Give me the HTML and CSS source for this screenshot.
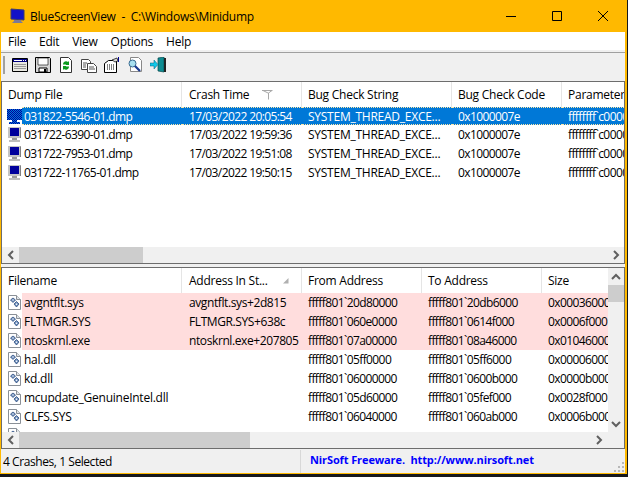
FILE: index.html
```html
<!DOCTYPE html>
<html lang="en">
  <head>
    <meta charset="UTF-8" />
    <title>BlueScreenView</title>
    <link rel="stylesheet" href="styles.css">
  </head>
  <body>
    <svg class="defs" width="0" height="0">
      <defs>
        <pattern id="dither" width="2" height="2" patternUnits="userSpaceOnUse">
          <rect width="2" height="2" fill="#0078d7"/>
          <rect width="1" height="1" fill="#00009c"/>
          <rect x="1" y="1" width="1" height="1" fill="#00009c"/>
        </pattern>
      </defs>
      <symbol id="monitor" viewBox="0 0 15 15">
        <path d="M1 0h13v11H1z" fill="#c4c4c4"/>
        <path d="M3 1h9v8H3z" fill="#00009c"/>
        <path d="M14 0v11h-1V1z" fill="#808080"/>
        <path d="M5 11h5v2H5z" fill="#9a9a9a"/>
        <path d="M2 13h11v2H2z" fill="#bdbdbd"/>
      </symbol>
      <symbol id="monitor-sel" viewBox="0 0 15 15">
        <path d="M0 0h15v11H0zM5 11h5v2H5zM2 13h11v2H2z" fill="url(#dither)"/>
      </symbol>
      <symbol id="driver" viewBox="0 0 13 15">
        <path d="M.5.5h8l4 4v10H.5z" fill="#fff" stroke="#8a9097"/>
        <path d="M8.500.5v4h4" fill="#dfe3e8" stroke="#8a9097"/>
        <path d="M2.500 5l2.500-2 2.500 2-2.500 2.500zM6 9l2.500-2.500L11 9l-2.500 3z" fill="#6f8fbc" stroke="#2f4f80" stroke-width=".8"/>
        <circle cx="5" cy="5" r=".7" fill="#fff"/>
        <circle cx="8.500" cy="9.300" r=".8" fill="#fff"/>
      </symbol>
      <symbol id="chev-left" viewBox="0 0 8 10"><path d="M6 1L2 5l4 4" fill="none" stroke="#606060" stroke-width="2"/></symbol>
      <symbol id="chev-right" viewBox="0 0 8 10"><path d="M2 1l4 4-4 4" fill="none" stroke="#606060" stroke-width="2"/></symbol>
      <symbol id="chev-up" viewBox="0 0 10 8"><path d="M1 6l4-4 4 4" fill="none" stroke="#606060" stroke-width="2"/></symbol>
      <symbol id="chev-down" viewBox="0 0 10 8"><path d="M1 2l4 4 4-4" fill="none" stroke="#606060" stroke-width="2"/></symbol>
    </svg>

    <div class="window">
      <div class="titlebar">
        <svg class="app-icon" width="16" height="16" viewBox="0 0 16 16">
          <path d="M2 1l13 1v10L2 11z" fill="#1212c8" stroke="#3a3a70"/>
          <path d="M5 12h7v1l2 2H3l2-2z" fill="#7a7a98"/>
        </svg>
        <span class="title-text">BlueScreenView&nbsp; - &nbsp;C:\Windows\Minidump</span>
        <span class="win-buttons">
          <svg width="10" height="10" viewBox="0 0 10 10"><path d="M0 5.500h10" stroke="#000"/></svg>
          <svg width="10" height="10" viewBox="0 0 10 10"><path d="M.5.5h9v9h-9z" fill="none" stroke="#000"/></svg>
          <svg width="10" height="10" viewBox="0 0 10 10"><path d="M0 0l10 10M10 0L0 10" stroke="#000"/></svg>
        </span>
      </div>

      <div class="menubar">
        <span>File</span><span>Edit</span><span>View</span><span>Options</span><span>Help</span>
      </div>

      <div class="toolbar">
        <span class="grip"></span>
        <!-- properties window -->
        <svg width="16" height="16" viewBox="0 0 16 16"><path d="M.5 1.500h15v13H.5z" fill="#e8e8e0" stroke="#000"/><path d="M1 2h14v3H1z" fill="#000080"/><path d="M2 3h8v1H2zM11 3h1v1h-1zM13 3h1v1h-1z" fill="#fff"/><path d="M2 7.500h12M2 9.500h12M2 11.500h12" stroke="#999"/></svg>
        <!-- save -->
        <svg width="16" height="16" viewBox="0 0 16 16"><path d="M.5.5h14l1 1v14H.5z" fill="#d8d8d8" stroke="#000"/><path d="M3 1h10v7H3z" fill="#fff" stroke="#000" stroke-width=".6"/><path d="M4 11h8v4H4z" fill="#fff" stroke="#000"/><path d="M9 12h2v3H9z"/></svg>
        <!-- refresh -->
        <svg width="16" height="16" viewBox="0 0 16 16"><path d="M2.500.5h8l3 3v12h-11z" fill="#fff" stroke="#333"/><path d="M5 7a3 3 0 0 1 5-2l1-1v4H7l1-1a2 2 0 0 0-2 1z" fill="#0a9a1e"/><path d="M11 10a3 3 0 0 1-5 2l-1 1V9h4l-1 1a2 2 0 0 0 2-1z" fill="#0a9a1e"/></svg>
        <!-- copy -->
        <svg width="16" height="16" viewBox="0 0 16 16"><path d="M.5 2.500h7l2 2v8h-9z" fill="#fff" stroke="#444"/><path d="M6.500 6.500h6l3 3v6h-9z" fill="#fff" stroke="#444"/><path d="M2 6h4M2 8h3M2 10h3M8 10h5M8 12h6" stroke="#555"/></svg>
        <!-- html report -->
        <svg width="16" height="16" viewBox="0 0 16 16"><path d="M.5 6.500l4-3h8v12H.5z" fill="#fff" stroke="#000"/><path d="M3 8h7M3 10h7M3 12h7" stroke="#000" stroke-dasharray="1 1"/><path d="M8 3l5-2 1 3-3 1z" fill="#d8d8d8" stroke="#000" stroke-width=".7"/><path d="M14.500 0v5" stroke="#000090"/></svg>
        <!-- find -->
        <svg width="16" height="16" viewBox="0 0 16 16"><path d="M3.500.5h8l3 3v11h-11z" fill="#fff" stroke="#888"/><circle cx="5.500" cy="6.500" r="3.500" fill="#a8e0f0" stroke="#3a6a90"/><path d="M8 9l5 5" stroke="#1a3a90" stroke-width="2.200"/></svg>
        <!-- exit -->
        <svg width="16" height="16" viewBox="0 0 16 16"><path d="M8 1l6-1v15l-6-1z" fill="#0e8c92" stroke="#06484c" stroke-width=".7"/><path d="M14 1h2v14h-2z" fill="#222"/><path d="M0 6h4V3l4 4.500L4 12V9H0z" fill="#10c8e8" stroke="#0a5a7a" stroke-width=".5"/></svg>
      </div>

      <div class="pane pane-top">
        <div class="list">
          <div class="row head">
            <span>Dump File</span>
            <span>Crash Time
              <svg class="sort sort-time" width="11" height="10" viewBox="0 0 11 10"><path d="M0 .5h10.500M1 .5l6 3M10 .5L6.500 3v6.500" fill="none" stroke="#a8a8a8"/></svg>
            </span>
            <span>Bug Check String</span>
            <span>Bug Check Code</span>
            <span>Parameter 1</span>
          </div>
          <div class="row selected">
            <span class="name"><svg width="15" height="15"><use href="#monitor-sel"/></svg><b class="num">031822-5546-01.dmp</b></span>
            <span class="num">17/03/2022 20:05:54</span>
            <span>SYSTEM_THREAD_EXCE...</span>
            <span class="num">0x1000007e</span>
            <span class="num">ffffffff`c0000005</span>
          </div>
          <div class="row">
            <span class="name"><svg width="15" height="15"><use href="#monitor"/></svg><b class="num">031722-6390-01.dmp</b></span>
            <span class="num">17/03/2022 19:59:36</span>
            <span>SYSTEM_THREAD_EXCE...</span>
            <span class="num">0x1000007e</span>
            <span class="num">ffffffff`c0000005</span>
          </div>
          <div class="row">
            <span class="name"><svg width="15" height="15"><use href="#monitor"/></svg><b class="num">031722-7953-01.dmp</b></span>
            <span class="num">17/03/2022 19:51:08</span>
            <span>SYSTEM_THREAD_EXCE...</span>
            <span class="num">0x1000007e</span>
            <span class="num">ffffffff`c0000005</span>
          </div>
          <div class="row">
            <span class="name"><svg width="15" height="15"><use href="#monitor"/></svg><b class="num">031722-11765-01.dmp</b></span>
            <span class="num">17/03/2022 19:50:15</span>
            <span>SYSTEM_THREAD_EXCE...</span>
            <span class="num">0x1000007e</span>
            <span class="num">ffffffff`c0000005</span>
          </div>
        </div>
        <div class="hscroll">
          <span class="arrow"><svg width="8" height="10"><use href="#chev-left"/></svg></span>
          <span class="thumb thumb-top"></span>
          <span class="arrow arrow-end"><svg width="8" height="10"><use href="#chev-right"/></svg></span>
        </div>
      </div>

      <div class="pane pane-bottom">
        <div class="body-wrap">
          <div class="list">
            <div class="row head">
              <span>Filename</span>
              <span>Address In St...
                <svg class="sort sort-addr" width="6" height="6" viewBox="0 0 6 6"><path d="M5.500 0v5.500H0z" fill="#b0b0b0"/></svg>
              </span>
              <span>From Address</span>
              <span>To Address</span>
              <span>Size</span>
            </div>
            <div class="row pink">
              <span class="name"><svg width="13" height="15"><use href="#driver"/></svg><b>avgntflt.sys</b></span>
              <span class="addr">avgntflt.sys+2d815</span>
              <span class="num">fffff801`20d80000</span>
              <span class="num">fffff801`20db6000</span>
              <span class="num">0x00036000</span>
            </div>
            <div class="row pink">
              <span class="name"><svg width="13" height="15"><use href="#driver"/></svg><b>FLTMGR.SYS</b></span>
              <span class="addr">FLTMGR.SYS+638c</span>
              <span class="num">fffff801`060e0000</span>
              <span class="num">fffff801`0614f000</span>
              <span class="num">0x0006f000</span>
            </div>
            <div class="row pink">
              <span class="name"><svg width="13" height="15"><use href="#driver"/></svg><b>ntoskrnl.exe</b></span>
              <span class="addr">ntoskrnl.exe+207805</span>
              <span class="num">fffff801`07a00000</span>
              <span class="num">fffff801`08a46000</span>
              <span class="num">0x01046000</span>
            </div>
            <div class="row">
              <span class="name"><svg width="13" height="15"><use href="#driver"/></svg><b>hal.dll</b></span>
              <span></span>
              <span class="num">fffff801`05ff0000</span>
              <span class="num">fffff801`05ff6000</span>
              <span class="num">0x00006000</span>
            </div>
            <div class="row">
              <span class="name"><svg width="13" height="15"><use href="#driver"/></svg><b>kd.dll</b></span>
              <span></span>
              <span class="num">fffff801`06000000</span>
              <span class="num">fffff801`0600b000</span>
              <span class="num">0x0000b000</span>
            </div>
            <div class="row">
              <span class="name"><svg width="13" height="15"><use href="#driver"/></svg><b>mcupdate_GenuineIntel.dll</b></span>
              <span></span>
              <span class="num">fffff801`05d60000</span>
              <span class="num">fffff801`05fef000</span>
              <span class="num">0x0028f000</span>
            </div>
            <div class="row">
              <span class="name"><svg width="13" height="15"><use href="#driver"/></svg><b>CLFS.SYS</b></span>
              <span></span>
              <span class="num">fffff801`06040000</span>
              <span class="num">fffff801`060ab000</span>
              <span class="num">0x0006b000</span>
            </div>
            <div class="row">
              <span class="name"><svg width="13" height="15"><use href="#driver"/></svg></span>
            </div>
          </div>
          <div class="vscroll">
            <span class="arrow"><svg width="10" height="8"><use href="#chev-up"/></svg></span>
            <span class="vthumb"></span>
            <span class="arrow arrow-down"><svg width="10" height="8"><use href="#chev-down"/></svg></span>
          </div>
        </div>
        <div class="hscroll">
          <span class="arrow"><svg width="8" height="10"><use href="#chev-left"/></svg></span>
          <span class="thumb thumb-bottom"></span>
          <span class="arrow arrow-end"><svg width="8" height="10"><use href="#chev-right"/></svg></span>
          <span class="corner"></span>
        </div>
      </div>

      <div class="statusbar">
        <span class="status-left">4 Crashes, 1 Selected</span>
        <span class="status-link">NirSoft Freeware.&nbsp; http://www.nirsoft.net</span>
        <svg class="size-grip" width="12" height="12" viewBox="0 0 12 12"><path d="M9 1h2v2H9zM5 5h2v2H5zM9 5h2v2H9zM1 9h2v2H1zM5 9h2v2H5zM9 9h2v2H9z" fill="#b8b8b8"/></svg>
      </div>
    </div>
  </body>
</html>
```

FILE: styles.css
```css
* {
  box-sizing: border-box;
}

html,
body {
  margin: 0;
  height: 100%;
  overflow: hidden;
}

body {
  background-color: #16181c;
  font-family: "Open Sans", "Liberation Sans", sans-serif;
  font-size: 12px;
  letter-spacing: -0.25px;
  color: #000;
}

.defs {
  display: block;
  height: 0;
}

.window {
  width: 627px;
  height: 474px;
  display: flex;
  flex-direction: column;
  background-color: #f0f0f0;
  border: 1px solid #ffb900;
  border-width: 0 2px 1px 1px;
}

.titlebar {
  height: 32px;
  flex: none;
  display: flex;
  align-items: center;
  padding-left: 9px;
  margin-left: -1px;
  background-color: #ffb900;
}

.title-text {
  margin-left: 5px;
}

.win-buttons {
  margin-left: auto;
  display: flex;
  gap: 36px;
  padding-right: 17px;
}

.menubar {
  height: 18px;
  flex: none;
  display: flex;
  align-items: center;
  gap: 13px;
  padding-left: 7px;
  background-color: #fff;
}

.toolbar {
  height: 29px;
  flex: none;
  display: flex;
  align-items: center;
  gap: 7px;
  padding: 0 0 4px 2px;
  margin-top: 2px;
  border-top: 1px solid #a0a0a0;
}

.grip {
  width: 2px;
  height: 18px;
  background-color: #a0a0a0;
}

.pane {
  display: flex;
  flex-direction: column;
  border: 1px solid #6d6d6d;
  overflow: hidden;
}

.pane-top {
  height: 183px;
  flex: none;
}

.pane-bottom {
  height: 182px;
  flex: none;
  margin-top: 3px;
}

.list {
  flex: 1;
  min-width: 0;
  min-height: 0;
  overflow: hidden;
  background-color: #fff;
}

.row {
  display: grid;
  height: 19px;
  width: 800px;
  align-items: center;
  white-space: nowrap;
}

.pane-top .row {
  grid-template-columns: 180px 120px 150px 110px 120px;
}

.pane-bottom .row {
  grid-template-columns: 180px 120px 120px 120px 120px;
}

.row > span {
  padding-left: 6px;
  overflow: hidden;
}

.row > span:nth-child(2) {
  padding-left: 7px;
}

.num {
  letter-spacing: -0.6px;
}

.addr {
  letter-spacing: -0.4px;
}

.row.head {
  height: 25px;
}

.row.head > span {
  height: 100%;
  display: flex;
  align-items: center;
  border-right: 1px solid #e5e5e5;
  position: relative;
}

.row.selected {
  height: 18px;
  background-color: #0078d7;
  color: #fff;
}

.row.selected > span:not(.name),
.row.selected .name b {
  height: 100%;
  display: flex;
  align-items: center;
  border-top: 1px dotted #ffe9a8;
  border-bottom: 1px dotted #ffe9a8;
}

.row.pink {
  background-color: #ffdddd;
}

.row > .name {
  display: flex;
  align-items: center;
  height: 100%;
  padding-left: 5px;
}

.pane-bottom .row > .name {
  padding-left: 6px;
}

.name b {
  flex: 1;
  font-weight: normal;
  padding-left: 2px;
}

.pane-bottom .name b {
  padding-left: 3px;
}

.row.selected > .name,
.row.pink > .name {
  background: linear-gradient(to right, #fff 20px, transparent 20px);
}

.sort {
  position: absolute;
}

.sort-time {
  left: 80px;
  top: 8px;
}

.sort-addr {
  left: 101px;
  top: 10px;
}

.hscroll {
  height: 16px;
  flex: none;
  display: flex;
  align-items: stretch;
  background-color: #f0f0f0;
}

.arrow {
  width: 17px;
  display: flex;
  align-items: center;
  justify-content: center;
  flex: none;
}

.arrow-end {
  margin-left: auto;
}

.thumb {
  background-color: #cdcdcd;
}

.thumb-top {
  width: 124px;
}

.thumb-bottom {
  width: 231px;
}

.corner {
  width: 17px;
  flex: none;
}

.body-wrap {
  flex: 1;
  min-height: 0;
  display: flex;
}

.vscroll {
  width: 16px;
  flex: none;
  display: flex;
  flex-direction: column;
  background-color: #f0f0f0;
}

.vscroll .arrow {
  width: auto;
  height: 17px;
}

.vthumb {
  height: 17px;
  background-color: #cdcdcd;
}

.arrow-down {
  margin-top: auto;
}

.statusbar {
  flex: 1;
  display: flex;
  align-items: center;
  position: relative;
  margin-top: 1px;
}

.status-left {
  width: 300px;
  padding-left: 2px;
  letter-spacing: -0.43px;
  border-right: 1px solid #d8d8d8;
  height: 100%;
  display: flex;
  align-items: center;
}

.status-link {
  padding: 0 0 4px 9px;
  color: #0000ff;
  font-weight: bold;
  font-size: 11px;
  letter-spacing: -0.11px;
}

.size-grip {
  position: absolute;
  right: 0;
  bottom: 0;
}
```
